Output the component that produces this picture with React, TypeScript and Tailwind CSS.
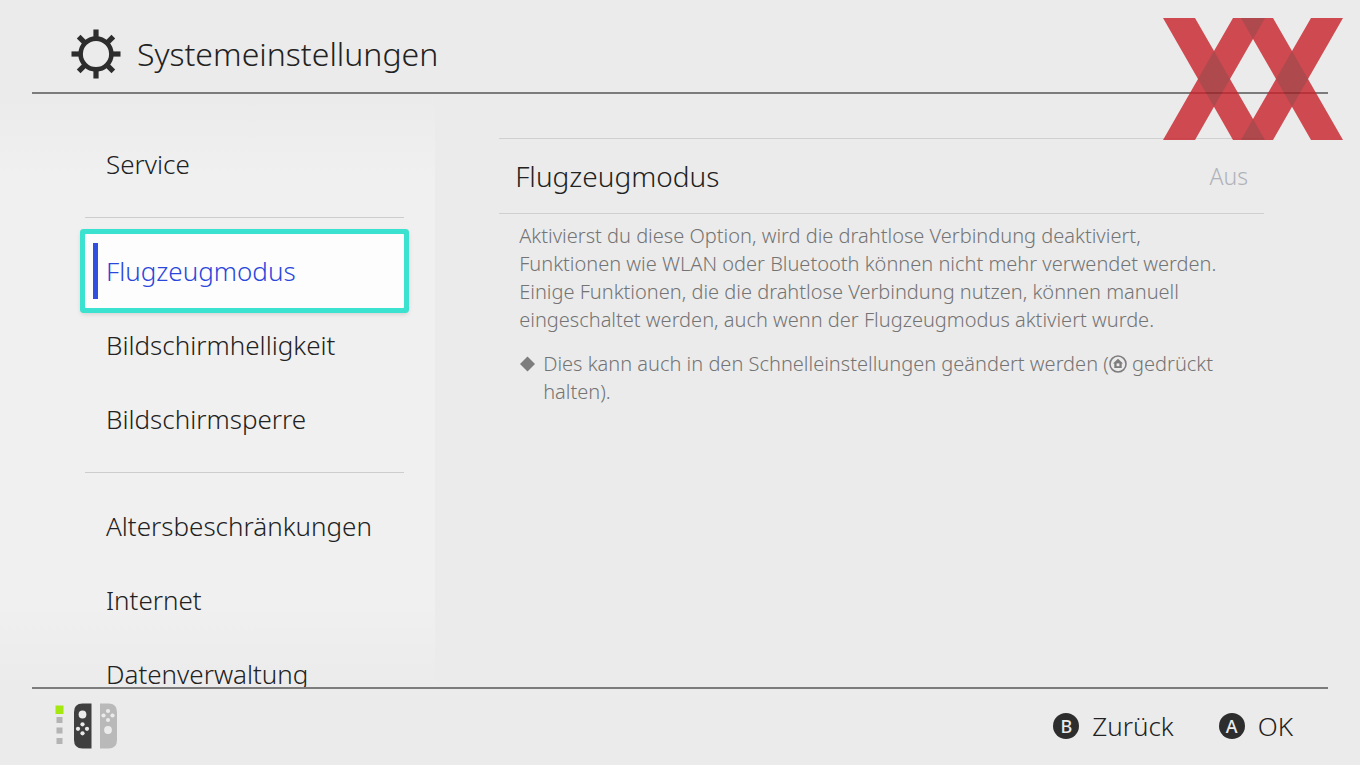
import { useState } from "react";
import clsx from "clsx";

const menuGroups = [
  ["Service"],
  ["Flugzeugmodus", "Bildschirmhelligkeit", "Bildschirmsperre"],
  ["Altersbeschränkungen", "Internet", "Datenverwaltung"],
];

const gearAngles = [0, 45, 90, 135, 180, 225, 270, 315];

function GearIcon() {
  return (
    <svg viewBox="0 0 50 50" className="size-[50px] shrink-0" aria-hidden="true">
      <circle cx="25" cy="25" r="15.4" fill="none" stroke="#2d2d2d" strokeWidth="4.6" />
      {gearAngles.map((angle) => (
        <rect
          key={angle}
          x="22.4"
          y="0.5"
          width="5.2"
          height="8.5"
          fill="#2d2d2d"
          transform={`rotate(${angle} 25 25)`}
        />
      ))}
    </svg>
  );
}

function BrandLogo() {
  return (
    <svg
      viewBox="0 0 540 366"
      className="pointer-events-none absolute top-[18px] right-[17px] z-10 w-[180px] opacity-80"
      aria-hidden="true"
    >
      <path
        d="M0 0H96L153 99L210 0H330L387 99L444 0H540L435 183L540 366H444L387 266L330 366H210L153 266L96 366H0L105 183ZM270 63L201 183L270 303L339 183Z"
        fill="#c8222a"
        fillRule="evenodd"
      />
      <g fill="#a02127">
        <path d="M153 99L201 183L153 266L105 183Z" />
        <path d="M387 99L435 183L387 266L339 183Z" />
        <path d="M234 0H306L270 63Z" />
        <path d="M234 366H306L270 303Z" />
      </g>
    </svg>
  );
}

function HomeIcon() {
  return (
    <svg viewBox="0 0 18 18" className="inline size-[18px] align-[-2px]" aria-label="HOME">
      <circle cx="9" cy="9" r="8" fill="none" stroke="#7d7d7d" strokeWidth="1.6" />
      <path d="M9 3.8L14 8.6H12.7V13H5.3V8.6H4Z" fill="#7d7d7d" />
      <rect x="7.6" y="8.4" width="2.8" height="2.8" fill="#ebebeb" />
    </svg>
  );
}

function ControllerIcon() {
  return (
    <svg viewBox="0 0 64 46" className="h-[46px] w-16" aria-hidden="true">
      <rect x="0.5" y="2.5" width="8" height="8.5" fill="#a5e80f" />
      <rect x="1.5" y="14" width="6" height="6" fill="#b4b4b4" />
      <rect x="1.5" y="24.5" width="6" height="6" fill="#b4b4b4" />
      <rect x="1.5" y="35" width="6" height="6" fill="#b4b4b4" />
      <path d="M36.500 0.500V45.500H27.500Q19 45.500 19 37V9Q19 0.500 27.500 0.500Z" fill="#3f3f3f" />
      <path d="M45 0.500V45.500H53.500Q62 45.500 62 37V9Q62 0.500 53.500 0.500Z" fill="#b9b9b9" />
      <g fill="#ebebeb">
        <circle cx="27.500" cy="11.500" r="3.900" />
        <circle cx="27.500" cy="21.300" r="2.100" />
        <circle cx="27.500" cy="30.300" r="2.100" />
        <circle cx="23" cy="25.800" r="2.100" />
        <circle cx="32" cy="25.800" r="2.100" />
        <circle cx="53" cy="27" r="3.900" />
        <circle cx="53" cy="8" r="2.100" />
        <circle cx="53" cy="17" r="2.100" />
        <circle cx="48.500" cy="12.500" r="2.100" />
        <circle cx="57.500" cy="12.500" r="2.100" />
      </g>
    </svg>
  );
}

function FooterAction({ letter, label }: { letter: string; label: string }) {
  return (
    <button className="flex items-center gap-[13px] text-[26px] leading-8">
      <span className="flex size-[26px] items-center justify-center rounded-full bg-[#2d2d2d] text-lg font-medium text-[#ebebeb]">
        {letter}
      </span>
      {label}
    </button>
  );
}

export default function App() {
  const [selected, setSelected] = useState("Flugzeugmodus");

  return (
    <div className="relative flex h-screen flex-col overflow-hidden bg-[#ebebeb] font-['Noto_Sans',sans-serif] font-light text-[#222222]">
      <header className="mx-8 flex h-[94px] shrink-0 items-center gap-4 border-b-2 border-[#7c7c7c] pt-4 pl-[39px]">
        <GearIcon />
        <h1 className="text-[32px] leading-10">Systemeinstellungen</h1>
      </header>
      <BrandLogo />

      <div className="flex min-h-0 flex-1">
        <nav className="w-[32%] shrink-0 overflow-hidden bg-[linear-gradient(to_bottom,#ebebeb,#f0f0f0_14%,#f0f0f0_86%,#ebebeb)] pt-[33px] pr-[31px] pl-[85px]">
          {menuGroups.map((group, index) => (
            <ul
              key={group[0]}
              className={clsx(index > 0 && "mt-4 border-t border-[#cdcdcd] pt-4")}
            >
              {group.map((item) => {
                const isActive = item === selected;
                return (
                  <li key={item}>
                    <button
                      onClick={() => setSelected(item)}
                      className={clsx(
                        "flex h-[74px] w-full items-center gap-2 pl-2 text-[26px] leading-8",
                        isActive &&
                          "rounded-[1px] bg-[#fdfdfd] text-[#2947dc] shadow-[0_2px_5px_4px_rgba(0,0,0,0.15)] ring-5 ring-[#3ce2d0]"
                      )}
                    >
                      <span className={clsx("h-14 w-[5px]", isActive && "bg-[#3250e0]")} />
                      {item}
                    </button>
                  </li>
                );
              })}
            </ul>
          ))}
        </nav>

        <main className="min-w-0 flex-1 pt-11 pr-24 pl-16">
          <button className="flex h-[76px] w-full items-center justify-between border-y border-[#d0d0d0] px-4">
            <span className="text-[28px] leading-9">Flugzeugmodus</span>
            <span className="text-[23px] leading-8 text-[#b0b2ba]">Aus</span>
          </button>
          <div className="px-5 pt-2 text-[20px] leading-7 text-[#747474]">
            <p>
              Aktivierst du diese Option, wird die drahtlose Verbindung deaktiviert,
              <br />
              Funktionen wie WLAN oder Bluetooth können nicht mehr verwendet werden.
              <br />
              Einige Funktionen, die die drahtlose Verbindung nutzen, können manuell
              <br />
              eingeschaltet werden, auch wenn der Flugzeugmodus aktiviert wurde.
            </p>
            <div className="mt-4 flex gap-2">
              <svg viewBox="0 0 16 16" className="mt-[6px] size-4 shrink-0" aria-hidden="true">
                <path d="M8.500 0.500L16 8L8.500 15.500L1 8Z" fill="#7d7d7d" />
              </svg>
              <p>
                Dies kann auch in den Schnelleinstellungen geändert werden (<HomeIcon /> gedrückt
                <br />
                halten).
              </p>
            </div>
          </div>
        </main>
      </div>

      <footer className="mx-8 flex h-[78px] shrink-0 items-center justify-between border-t-2 border-[#7c7c7c] pr-[35px] pb-[2px] pl-[23px]">
        <ControllerIcon />
        <div className="flex gap-[45px]">
          <FooterAction letter="B" label="Zurück" />
          <FooterAction letter="A" label="OK" />
        </div>
      </footer>
    </div>
  );
}
